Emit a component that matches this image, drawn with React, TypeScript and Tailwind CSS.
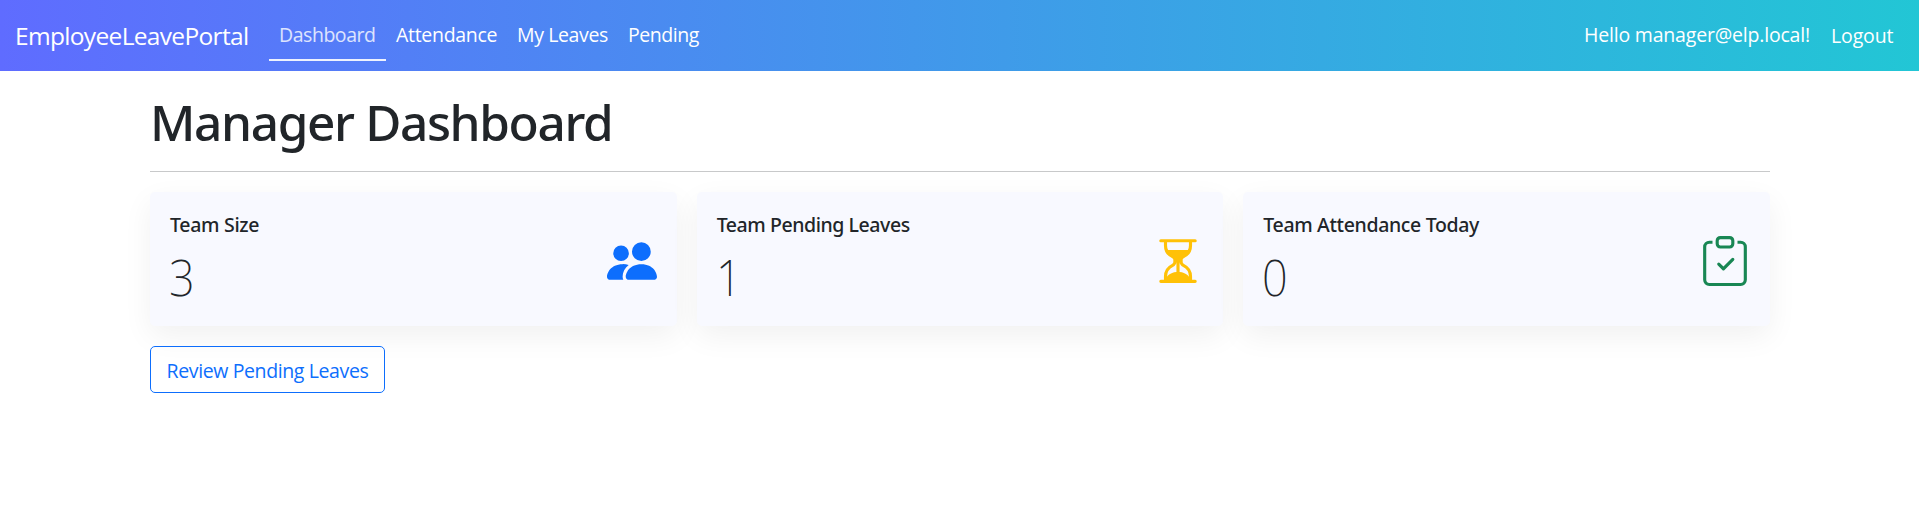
import React from "react";
import { BsPeopleFill, BsHourglassSplit, BsClipboardCheck } from "react-icons/bs";

const cards = [
  { title: "Team Size", value: "3", icon: <BsPeopleFill />, color: "text-[#0d6efd]", tracking: "tracking-[-0.3px]" },
  { title: "Team Pending Leaves", value: "1", icon: <BsHourglassSplit />, color: "text-[#ffc107]", tracking: "tracking-[-0.43px]" },
  { title: "Team Attendance Today", value: "0", icon: <BsClipboardCheck />, color: "text-[#198754]", tracking: "tracking-[-0.35px]" },
];

const links = [
  { label: "Dashboard", box: "w-[117px] text-white/80 border-white/90", tracking: "tracking-[-0.46px]" },
  { label: "Attendance", box: "w-[121px] border-transparent", tracking: "tracking-[-0.3px]" },
  { label: "My Leaves", box: "w-[111px] border-transparent", tracking: "tracking-[-0.38px]" },
  { label: "Pending", box: "w-[90px] border-transparent", tracking: "tracking-[-0.45px]" },
];

export default function App() {
  return (
    <div className="min-h-screen bg-white font-['Open_Sans',sans-serif] text-[19.5px] leading-[30px] text-[#212529]">
      <nav className="flex h-[71px] items-start whitespace-nowrap bg-linear-[90deg,#5f6cff,#22c6d5] pl-[15px] text-white">
        <a className="mt-[17px] w-[254px] text-[24.5px] leading-[38px] tracking-[-0.67px]">EmployeeLeavePortal</a>
        {links.map((l) => (
          <a key={l.label} className={`h-[61px] border-b-2 pl-[10px] pt-[20px] ${l.box} ${l.tracking}`}>
            {l.label}
          </a>
        ))}
        <div className="ml-auto flex">
          <span className="w-[247px] pt-[20px] tracking-[-0.19px]">Hello manager@elp.local!</span>
          <a className="w-[88px] pt-[21px] tracking-[-0.14px]">Logout</a>
        </div>
      </nav>
      <main className="ml-[150px] w-[1620px]">
        <h1 className="pt-[21px] font-['Noto_Sans',sans-serif] text-[49.5px] font-medium leading-[60px] tracking-[-1.36px]">Manager Dashboard</h1>
        <hr className="mt-[19px] border-t border-[#c8c9ca]" />
        <div className="mt-[20px] grid grid-cols-3 gap-5">
          {cards.map((c) => (
            <section key={c.title} className="flex h-[134px] items-center justify-between rounded-[5px] bg-[#f8f9ff] px-5 shadow-[0_10px_30px_rgba(0,0,0,0.06)]">
              <div className="self-start pt-[18px]">
                <h2 className={`font-['Noto_Sans',sans-serif] font-medium leading-[30px] ${c.tracking}`}>{c.title}</h2>
                <div className="mt-[7px] origin-left -translate-x-px scale-x-90 font-['Noto_Sans',sans-serif] text-[50px] font-extralight leading-[60px]">{c.value}</div>
              </div>
              <span className={`mt-[4px] text-[50px] ${c.color}`}>{c.icon}</span>
            </section>
          ))}
        </div>
        <button className="mt-5 h-[47px] w-[235px] rounded-[5px] border border-[#0d6efd] pt-[2px] tracking-[-0.38px] text-[#0d6efd]">Review Pending Leaves</button>
      </main>
    </div>
  );
}
